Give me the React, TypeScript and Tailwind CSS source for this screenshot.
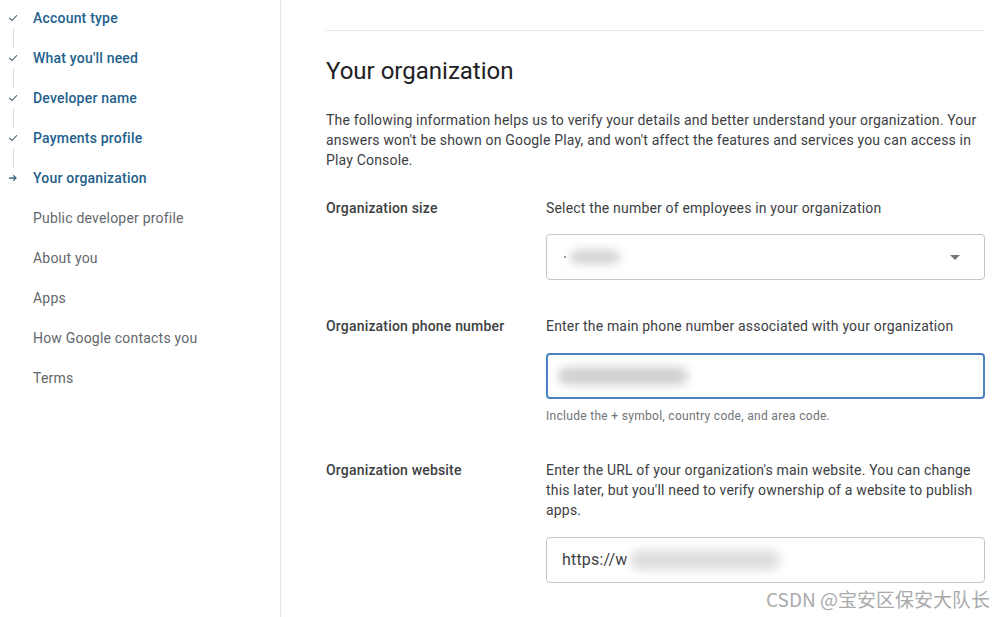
import React from 'react';

type StepState = 'done' | 'current' | 'todo';

const steps: { label: string; state: StepState }[] = [
  { label: 'Account type', state: 'done' },
  { label: "What you'll need", state: 'done' },
  { label: 'Developer name', state: 'done' },
  { label: 'Payments profile', state: 'done' },
  { label: 'Your organization', state: 'current' },
  { label: 'Public developer profile', state: 'todo' },
  { label: 'About you', state: 'todo' },
  { label: 'Apps', state: 'todo' },
  { label: 'How Google contacts you', state: 'todo' },
  { label: 'Terms', state: 'todo' },
];

const StepIcon: React.FC<{ state: StepState }> = ({ state }) => {
  if (state === 'done') {
    return (
      <svg width="10" height="10" viewBox="0 0 10 10" fill="none">
        <path d="M1.5 5.3 L4 7.6 L8.6 2.6" stroke="#5f7785" strokeWidth="1.3" strokeLinecap="round" strokeLinejoin="round" />
      </svg>
    );
  }
  if (state === 'current') {
    return (
      <svg width="10" height="10" viewBox="0 0 10 10" fill="none">
        <path d="M1.5 5 H8 M5.6 2.6 L8 5 L5.6 7.4" stroke="#3d6680" strokeWidth="1.3" strokeLinecap="round" strokeLinejoin="round" />
      </svg>
    );
  }
  return null;
};

const Sidebar: React.FC = () => (
  <aside className="w-[281px] shrink-0 border-r border-[#e6e7e9] pt-2 tracking-[0.2px]">
    {steps.map((step, i) => {
      const next = steps[i + 1];
      const showLine = next && step.state === 'done';
      return (
        <div key={step.label}>
          <div className="flex h-5 items-center">
            <div className="flex w-[26px] justify-center">
              <StepIcon state={step.state} />
            </div>
            <span
              className={
                step.state === 'todo'
                  ? 'ml-[7px] text-[14px] text-[#63676c]'
                  : 'ml-[7px] text-[14px] font-medium text-[#23618c]'
              }
            >
              {step.label}
            </span>
          </div>
          {next && (
            <div className="flex h-5 w-[26px] justify-center">
              {showLine && <div className="mt-[1px] h-[18px] w-px bg-[#d9dcdf]" />}
            </div>
          )}
        </div>
      );
    })}
  </aside>
);

const Blur: React.FC<{ className: string }> = ({ className }) => (
  <div className={'rounded-full bg-[#c9cacc] blur-[5px] ' + className} />
);

const App: React.FC = () => {
  return (
    <div className="relative flex h-[617px] w-[996px] overflow-hidden bg-white font-['Roboto','Liberation_Sans',sans-serif] text-[#3c4043]">
      <Sidebar />

      <main className="flex-1 pl-[45px] pr-[11px] pt-[30px]">
        <div className="border-t border-[#e8e9eb]" />

        <h1 className="mt-[24px] text-[24px] leading-8 text-[#202124]">Your organization</h1>

        <p className="mt-[23px] text-[14px] leading-5 tracking-[0.18px] text-[#3c4043]">
          The following information helps us to verify your details and better understand your organization. Your answers won't be shown on Google Play, and won't affect the features and services you can access in Play Console.
        </p>

        <div className="mt-[28px] grid grid-cols-[220px_1fr] text-[14px] leading-5 tracking-[0.18px]">
          {/* Organization size */}
          <div className="font-medium text-[#3c4043]">Organization size</div>
          <div>
            <div className="text-[#3c4043]">Select the number of employees in your organization</div>
            <div className="mt-4 flex h-[46px] items-center rounded-[4px] border border-[#c4c6c9] pl-[17px] pr-[24px]">
              <div className="h-[2px] w-[2px] rounded-full bg-[#777]" />
              <Blur className="ml-[4px] h-[14px] w-[50px] bg-[#d2d3d5]" />
              <div className="flex-1" />
              <svg width="10" height="5" viewBox="0 0 10 5">
                <path d="M0 0 L10 0 L5 5 Z" fill="#75787c" />
              </svg>
            </div>
          </div>

          {/* Phone */}
          <div className="mt-[36px] font-medium text-[#3c4043]">Organization phone number</div>
          <div className="mt-[36px]">
            <div className="text-[#3c4043]">Enter the main phone number associated with your organization</div>
            <div className="mt-[17px] flex h-[46px] items-center rounded-[4px] border-2 border-[#4a82c4] pl-[10px]">
              <Blur className="h-[18px] w-[130px] rounded-[6px] bg-[#cfd0d2]" />
            </div>
            <div className="mt-[9px] text-[12px] leading-4 tracking-[0.3px] text-[#6f7378]">
              Include the + symbol, country code, and area code.
            </div>
          </div>

          {/* Website */}
          <div className="mt-[36px] font-medium text-[#3c4043]">Organization website</div>
          <div className="mt-[36px]">
            <div className="text-[#3c4043]">
              Enter the URL of your organization's main website. You can change this later, but you'll need to verify ownership of a website to publish apps.
            </div>
            <div className="mt-[17px] flex h-[46px] items-center rounded-[4px] border border-[#c4c6c9] pl-[15px]">
              <span className="text-[16px] text-[#3c4043]">https://w</span>
              <Blur className="ml-[2px] h-[20px] w-[150px] rounded-[6px] bg-[#dcdddf]" />
            </div>
          </div>
        </div>
      </main>

      <div className="absolute right-[6px] top-[587px] font-['Noto_Sans_CJK_SC',sans-serif] text-[19px] leading-6 text-[#a9aaac]">
        CSDN @宝安区保安大队长
      </div>
    </div>
  );
};

export default App;
